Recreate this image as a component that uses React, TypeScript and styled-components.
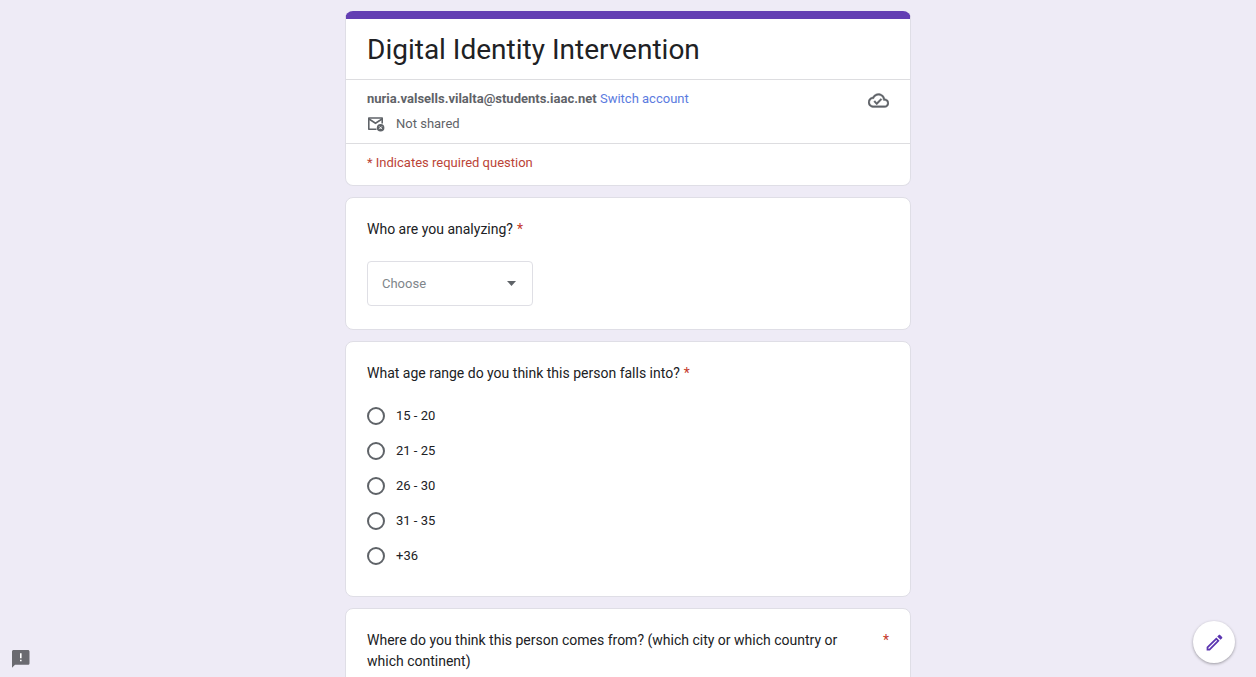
import React from "react";
import styled, { createGlobalStyle } from "styled-components";

const GlobalStyle = createGlobalStyle`
  *, *::before, *::after { box-sizing: border-box; }
  body {
    margin: 0;
    background: #eeebf6;
    color: #202124;
    font-family: Roboto, "Liberation Sans", sans-serif;
    font-size: 13px;
    line-height: 18px;
  }
`;

const Page = styled.div`
  height: 100vh;
  overflow: hidden;
`;

const Form = styled.form`
  display: flex;
  flex-direction: column;
  gap: 11px;
  max-width: 566px;
  margin: 0 auto;
  padding: 11px 0;
`;

const Card = styled.section`
  background: #fff;
  border: 1px solid #dfdee6;
  border-radius: 8px;
  padding: 21px 21px 23px;
`;

const HeaderCard = styled.header`
  background: #fff;
  border: 1px solid #dfdee6;
  border-top: 8px solid #633eb3;
  border-radius: 8px;
`;

const Title = styled.h1`
  margin: 0;
  padding: 13px 21px 11px;
  font-size: 28px;
  font-weight: 400;
  line-height: 36px;
`;

const Account = styled.div`
  display: flex;
  justify-content: space-between;
  align-items: flex-start;
  padding: 10px 21px;
  border: solid #dddde0;
  border-width: 1px 0;
  color: #5f6368;
`;

const AccountLines = styled.div`
  display: flex;
  flex-direction: column;
  gap: 7px;
`;

const SharedRow = styled.div`
  display: flex;
  align-items: center;
  gap: 11px;
`;

const SwitchLink = styled.a`
  color: #5b7be0;
  text-decoration: none;
`;

const RequiredNote = styled.p`
  margin: 0;
  padding: 10px 21px 13px;
  color: #bb4437;
`;

const Question = styled.div`
  display: flex;
  justify-content: ${(p: { $spread?: boolean }) => (p.$spread ? "space-between" : "flex-start")};
  gap: 4px;
  font-size: 14px;
  line-height: 21px;
`;

const QuestionText = styled.label`
  max-width: 490px;
`;

const Star = styled.span`
  color: #c5392b;
`;

const SelectBox = styled.div`
  position: relative;
  width: 166px;
  margin-top: 21px;
`;

const Select = styled.select`
  display: block;
  width: 100%;
  height: 45px;
  padding: 0 14px;
  appearance: none;
  background: #fff;
  border: 1px solid #dfdfe5;
  border-radius: 4px;
  color: #80868b;
  font: inherit;
`;

const Arrow = styled.svg`
  position: absolute;
  right: 17px;
  top: 20px;
  pointer-events: none;
`;

const Options = styled.fieldset`
  margin: 0;
  padding: 0;
  border: 0;
`;

const Legend = styled.legend`
  display: flex;
  gap: 4px;
  padding: 0;
  margin-bottom: 14px;
  font-size: 14px;
  line-height: 21px;
`;

const Option = styled.label`
  display: flex;
  align-items: center;
  gap: 11px;
  height: 35px;
`;

const Radio = styled.input`
  appearance: none;
  width: 18px;
  height: 18px;
  margin: 0;
  border: 2px solid #5f6368;
  border-radius: 50%;
  &:checked {
    border-color: #633eb3;
    background: radial-gradient(#633eb3 0 4px, transparent 5px);
  }
`;

const CornerButton = styled.button`
  position: fixed;
  display: flex;
  padding: 0;
  border: 0;
  background: none;
  cursor: pointer;
`;

const EditButton = styled(CornerButton)`
  right: 21px;
  bottom: 14px;
  width: 42px;
  height: 42px;
  align-items: center;
  justify-content: center;
  border-radius: 50%;
  background: #fff;
  box-shadow: 0 1px 3px rgba(0, 0, 0, 0.35);
`;

const ReportButton = styled(CornerButton)`
  left: 11px;
  bottom: 9px;
`;

const ages = ["15 - 20", "21 - 25", "26 - 30", "31 - 35", "+36"];

function MailOffIcon() {
  return (
    <svg width="18" height="18" viewBox="0 0 18 18" fill="none" aria-hidden="true">
      <path d="M9.5 14.2H1.8V3h13.4v5.4" stroke="#5f6368" strokeWidth="1.6" strokeLinejoin="round" />
      <path d="M2 4l6.500 4.200L15 4" stroke="#5f6368" strokeWidth="1.6" />
      <circle cx="13.6" cy="12.800" r="3.8" fill="#5f6368" />
      <path d="M12.3 11.500l2.600 2.600m0-2.600l-2.600 2.600" stroke="#fff" strokeWidth="1" />
    </svg>
  );
}

function CloudDoneIcon() {
  return (
    <svg width="21" height="21" viewBox="0 0 24 24" fill="#5f6368" stroke="#5f6368" strokeWidth="0.4" role="img" aria-label="Saved">
      <path d="M19.35 10.04C18.67 6.59 15.64 4 12 4 9.11 4 6.6 5.64 5.35 8.04 2.34 8.36 0 10.91 0 14c0 3.31 2.69 6 6 6h13c2.76 0 5-2.24 5-5 0-2.64-2.05-4.78-4.65-4.96zM19 18H6c-2.21 0-4-1.79-4-4 0-2.05 1.53-3.76 3.56-3.97l1.07-.11.5-.95C8.08 7.14 9.94 6 12 6c2.62 0 4.88 1.86 5.39 4.43l.3 1.5 1.53.11c1.56.1 2.78 1.41 2.78 2.96 0 1.65-1.35 3-3 3zm-9-3.82l-2.09-2.09L6.5 13.5 10 17l6.01-6.01-1.41-1.41z" />
    </svg>
  );
}

export default function App() {
  return (
    <Page>
      <GlobalStyle />
      <Form>
        <HeaderCard>
          <Title>Digital Identity Intervention</Title>
          <Account>
            <AccountLines>
              <div>
                <b>nuria.valsells.vilalta@students.iaac.net</b>{" "}
                <SwitchLink href="#switch">Switch account</SwitchLink>
              </div>
              <SharedRow>
                <MailOffIcon />
                <span>Not shared</span>
              </SharedRow>
            </AccountLines>
            <CloudDoneIcon />
          </Account>
          <RequiredNote>* Indicates required question</RequiredNote>
        </HeaderCard>

        <Card>
          <Question>
            <QuestionText htmlFor="person">Who are you analyzing?</QuestionText>
            <Star>*</Star>
          </Question>
          <SelectBox>
            <Select id="person" defaultValue="">
              <option value="">Choose</option>
            </Select>
            <Arrow width="9" height="5" viewBox="0 0 9 5" aria-hidden="true">
              <path d="M0 0h9L4.5 5z" fill="#5f6368" />
            </Arrow>
          </SelectBox>
        </Card>

        <Card>
          <Options>
            <Legend>
              What age range do you think this person falls into?
              <Star>*</Star>
            </Legend>
            {ages.map((age) => (
              <Option key={age}>
                <Radio type="radio" name="age" value={age} />
                {age}
              </Option>
            ))}
          </Options>
        </Card>

        <Card>
          <Question $spread>
            <QuestionText as="div">
              Where do you think this person comes from? (which city or which country or which continent)
            </QuestionText>
            <Star>*</Star>
          </Question>
        </Card>
      </Form>

      <ReportButton type="button" aria-label="Report a problem">
        <svg width="19" height="19" viewBox="0 0 19 19" aria-hidden="true">
          <path d="M2.6 1h14.3c.9 0 1.6.7 1.6 1.6v11.6c0 .9-.7 1.6-1.6 1.6H4L1 18.8V2.6C1 1.7 1.7 1 2.6 1z" fill="#6a6a70" />
          <path d="M9 4.300h1.600v5H9zM9 10.700h1.600v1.600H9z" fill="#fff" />
        </svg>
      </ReportButton>
      <EditButton type="button" aria-label="Edit this form">
        <svg width="21" height="21" viewBox="0 0 24 24" fill="#5b35b0" aria-hidden="true">
          <path d="M14.06 9.02l.92.92L5.92 19H5v-.92l9.06-9.06M17.66 3c-.25 0-.51.1-.7.29l-1.83 1.83 3.75 3.75 1.83-1.83c.39-.39.39-1.02 0-1.41l-2.34-2.34c-.2-.2-.45-.29-.71-.29zm-3.6 3.190L3 17.250V21h3.750L17.810 9.940l-3.750-3.750z" />
        </svg>
      </EditButton>
    </Page>
  );
}
